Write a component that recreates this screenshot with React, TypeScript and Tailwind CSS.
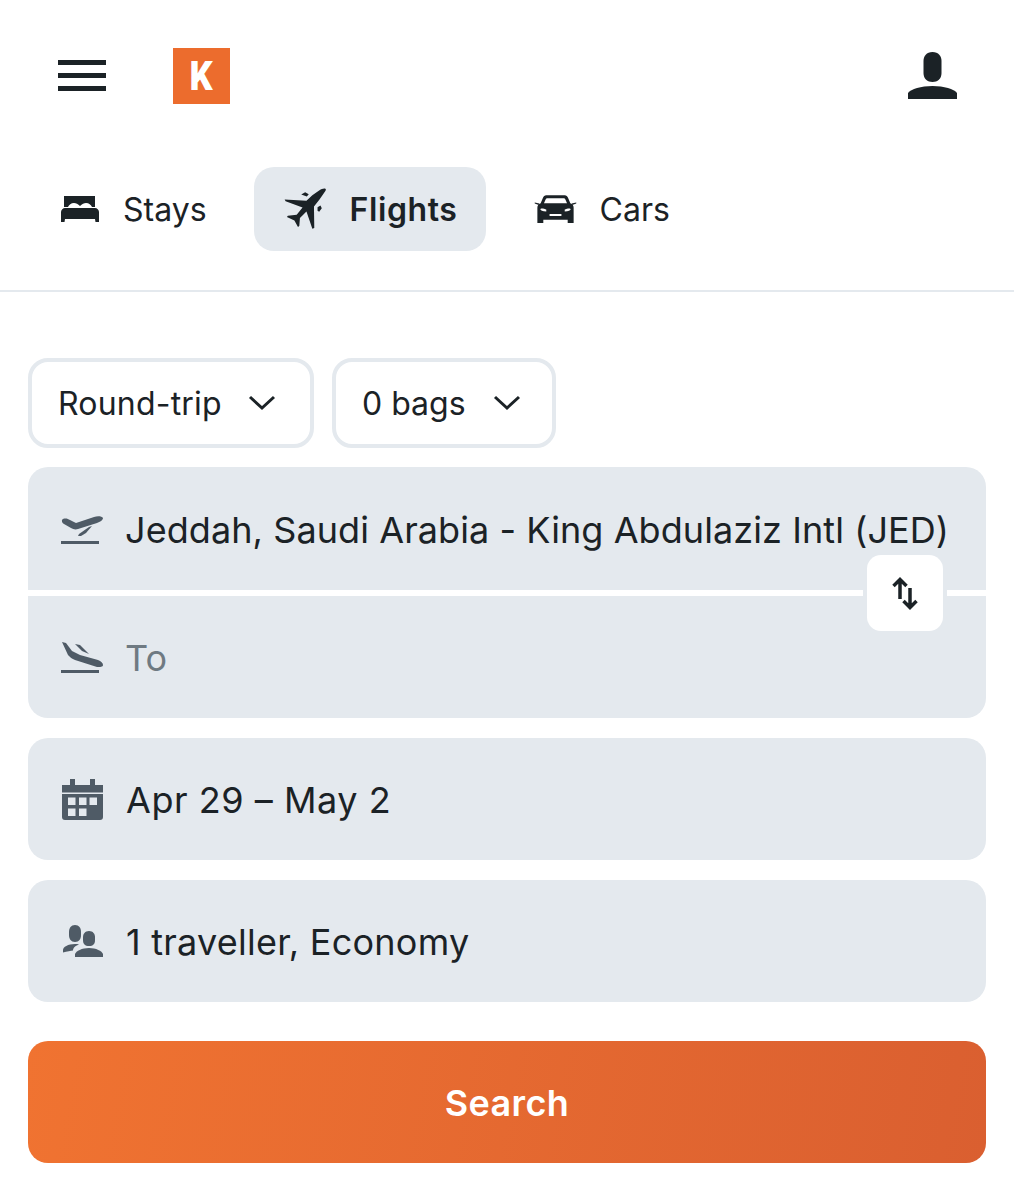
import React from "react";

const Bed = () => (
  <svg width="38" height="26" viewBox="0 0 38 26" fill="#1b2226">
    <path d="M3 0h31v11h-3c-1-2-3-4-6-4-2 0-4 1-6 3-2-2-4-3-6-3-3 0-5 2-6 4H3z" />
    <path d="M4 12h30c2 0 4 2 4 4v10h-3.500l-.5-3H4l-.5 3H0V16c0-2 2-4 4-4z" />
  </svg>
);

const Plane = () => (
  <svg width="44" height="44" viewBox="40 80 135 135" fill="#1b2226">
    <path d="M170 85c-5-2-12 1-18 5l-22 15-18 17-67-4 3 6 52 19-18 22-27 3-3 4 23 11 11 20 4-3 2-25 20-20 18 53 6-2-1-66 17-22 18-26c2-3 2-6 0-7z" />
    <path d="M96 103l12-7 11 6-6 7zM146 142l9-5 4 8-8 11-5-3z" />
  </svg>
);

const Car = () => (
  <svg width="43" height="29" viewBox="795 104 130 88" fill="#1b2226">
    <path
      fillRule="evenodd"
      d="M832 105h56c5 0 8 3 10 7l7 17c7 3 10 7 10 14v46h-18v-10h-74v10h-18v-46c0-7 3-11 10-14l7-17c2-4 5-7 10-7zm4 9c-3 0-5 1-6 4l-5 11h70l-5-11c-1-3-3-4-6-4zm-22 33c0 4 7 6 18 7v-6c-6-3-18-5-18-1zm92 0c0-4-12-2-18 1v6c11-1 18-3 18-7zm-64 15v6h36v-6z"
    />
    <path d="M797 127l14 3-2 4-12-4zM923 127l-14 3 2 4 12-4z" />
  </svg>
);

const Takeoff = () => (
  <svg width="42" height="30" viewBox="0 0 42 30" fill="#4f5b66">
    <path d="M2 3c3-1 5 0 7 1l6 3 18-6c3-1 8-1 9 1 0 2-3 4-6 5L17 13c-3 1-5 0-7-1L3 8C1 7 0 4 2 3z" />
    <path d="M18 18l10-7 3-1-6 7-5 3h-3z" />
    <rect x="0" y="25" width="38" height="3" />
  </svg>
);

const Landing = () => (
  <svg width="42" height="32" viewBox="0 0 42 32" fill="#4f5b66">
    <path d="M1 0l4 1 6 8 8 4 18 5c3 1 5 3 5 5s-3 2-6 2L14 18c-3-1-5-3-7-5z" />
    <path d="M14 2l5 1 9 9-7-3z" />
    <rect x="0" y="28" width="38" height="3" />
  </svg>
);

const CalendarIcon = () => (
  <svg width="41" height="41" viewBox="0 0 41 41" fill="#4f5b66">
    <path
      fillRule="evenodd"
      d="M8 0h5v6h15V0h5v6h8v7.500H0V6h8zM0 15h41v23c0 2-1 3-3 3H3c-2 0-3-1-3-3zm6 3.500V26h7.500v-7.500zm11 0V26h7.500v-7.500zm10.500 0V26H35v-7.500zM6 29.500V37h7.500v-7.500zm11 0V37h7.500v-7.500z"
    />
  </svg>
);

const People = () => (
  <svg width="40" height="32" viewBox="0 0 40 32" fill="#4f5b66">
    <path d="M12 0c4 0 6 3 6 7v3c0 4-2 7-6 7s-6-3-6-7V7c0-4 2-7 6-7z" />
    <path d="M26 6c4 0 6 3 6 6v3c0 4-2 6-6 6s-6-2-6-6v-3c0-3 2-6 6-6z" />
    <path d="M0 25c0-3 5-6 12-6 1 0 3 0 4 .5-3 1-6 3-6 6-2 0-6 1-10 2z" />
    <path d="M12 32v-3c1-3 7-6 14-6s13 3 14 6v3z" />
  </svg>
);

const User = () => (
  <svg width="49" height="47" viewBox="0 0 49 47" fill="#1b2226">
    <path d="M24.500 0c6 0 9 4 9 9v12c0 6-4 9-9 9s-9-3-9-9V9c0-5 3-9 9-9z" />
    <path d="M0 41c3-4 13-7 24.500-7S46 37 49 41v6H0z" />
  </svg>
);

const Chevron = () => (
  <svg width="28" height="16" viewBox="0 0 28 16" fill="none" stroke="#1b2226" strokeWidth="3">
    <path d="M2 2l12 11L26 2" />
  </svg>
);

const Swap = () => (
  <svg width="26" height="33" viewBox="0 0 26 33" fill="none" stroke="#1b2226" strokeWidth="3.500">
    <path d="M8 3v19M1.500 9l6.500-6.500L14.500 9" />
    <path d="M18 11v19M11.500 24l6.500 6.500 6.500-6.500" />
  </svg>
);

const Row = ({ icon, children, className = "" }: { icon: React.ReactNode; children: React.ReactNode; className?: string }) => (
  <div className={`flex h-[122px] items-center bg-[#e4e9ee] pl-[33px] ${className}`}>
    <div className="flex w-[64px] shrink-0 items-center">{icon}</div>
    <span className="pt-[2px] text-[36px] leading-none whitespace-nowrap">{children}</span>
  </div>
);

export default function App() {
  return (
    <div className="h-[1200px] w-[1014px] overflow-hidden bg-white text-[#1b2226] [font-family:Inter,'Liberation_Sans',sans-serif]">
      <header className="flex h-[167px] items-start justify-between pr-[57px] pl-[58px]">
        <div className="flex items-start">
          <div className="mt-[60px] flex w-[48px] flex-col gap-[8px]">
            <div className="h-[5px] bg-[#1b2226]" />
            <div className="h-[5px] bg-[#1b2226]" />
            <div className="h-[5px] bg-[#1b2226]" />
          </div>
          <div className="mt-[48px] ml-[67px] flex h-[56px] w-[57px] items-center justify-center bg-[#ec6c2d] font-['Roboto'] text-[41px] leading-none font-black text-white">
            <span className="inline-block scale-x-[0.88]">K</span>
          </div>
        </div>
        <div className="mt-[52px]">
          <User />
        </div>
      </header>

      <nav className="flex h-[125px] items-start border-b-2 border-[#e4e9ee] pl-[28px]">
        <div className="flex h-[84px] items-center pr-[47px] pl-[33px]">
          <div className="w-[62px]">
            <Bed />
          </div>
          <span className="pt-[2px] text-[32px] leading-none">Stays</span>
        </div>
        <div className="flex h-[84px] w-[232px] items-center rounded-[20px] bg-[#e4e9ee] pl-[29px]">
          <div className="w-[67px]">
            <Plane />
          </div>
          <span className="pt-[2px] text-[32px] leading-none font-semibold tracking-[0.6px]">Flights</span>
        </div>
        <div className="flex h-[84px] items-center pl-[48px]">
          <div className="w-[66px]">
            <Car />
          </div>
          <span className="pt-[2px] text-[32px] leading-none">Cars</span>
        </div>
      </nav>

      <main className="px-[28px] pt-[66px]">
        <div className="flex gap-[18px]">
          <div className="flex h-[90px] w-[286px] items-center justify-between rounded-[20px] border-4 border-[#e4e9ee] pr-[34px] pl-[26px] text-[32px]">
            <span className="pt-[2px] tracking-[0.2px]">Round-trip</span>
            <Chevron />
          </div>
          <div className="flex h-[90px] w-[224px] items-center justify-between rounded-[20px] border-4 border-[#e4e9ee] pr-[31px] pl-[26px] text-[32px]">
            <span className="pt-[2px]">0 bags</span>
            <Chevron />
          </div>
        </div>

        <div className="relative mt-[19px]">
          <Row icon={<div className="mt-[5px]"><Takeoff /></div>} className="h-[123px] rounded-t-[20px]">
            <span className="tracking-[0.08px]">Jeddah, Saudi Arabia - King Abdulaziz Intl (JED)</span>
          </Row>
          <div className="h-[6px]" />
          <Row icon={<div className="mt-[2px]"><Landing /></div>} className="rounded-b-[20px]">
            <span className="text-[#6f7a82]">To</span>
          </Row>
          <div className="absolute top-[88px] left-[835px] rounded-[16px] bg-[#e4e9ee] px-[4px]">
            <div className="flex h-[76px] w-[76px] items-center justify-center rounded-[14px] bg-white">
              <Swap />
            </div>
          </div>
        </div>

        <Row icon={<div className="ml-[1px]"><CalendarIcon /></div>} className="mt-[20px] rounded-[20px]">
          <span className="ml-[1px] tracking-[0.55px]">Apr 29 – May 2</span>
        </Row>
        <Row icon={<div className="ml-[2px]"><People /></div>} className="mt-[20px] rounded-[20px]">
          <span className="ml-[1px] tracking-[0.25px]">1 traveller, Economy</span>
        </Row>

        <div className="mt-[39px] flex h-[122px] items-center justify-center rounded-[20px] bg-[linear-gradient(100deg,#f07331,#da5f30)] text-[36px] font-semibold tracking-[0.4px] text-white">
          <span className="pt-[2px]">Search</span>
        </div>
      </main>
    </div>
  );
}
